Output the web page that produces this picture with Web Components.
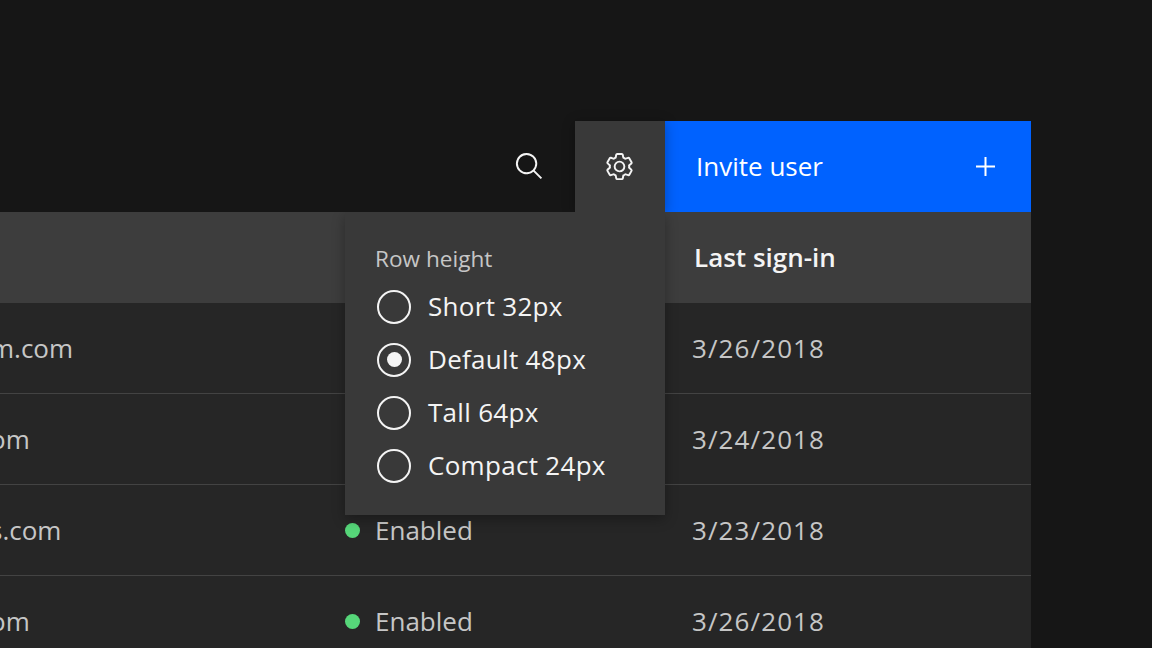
<!DOCTYPE html>
<html>
<head>
<meta charset="utf-8">
<title>Table settings</title>
<style>
html, body { margin: 0; height: 100%; background: #161616; overflow: hidden; }
body {
    font-family: "Open Sans", "Liberation Sans", sans-serif;
    font-size: 26px;
    color: #c6c6c6;
}
</style>
</head>
<body>

<user-table>
    <table-toolbar slot="toolbar"></table-toolbar>
    <table-head slot="head" label="Last sign-in"></table-head>
    <table-row date="3/26/2018">m.com</table-row>
    <table-row date="3/24/2018">om</table-row>
    <table-row date="3/23/2018" status="Enabled">s.com</table-row>
    <table-row date="3/26/2018" status="Enabled">om</table-row>
    <row-height-menu slot="overlay" label="Row height">
        <radio-option>Short 32px</radio-option>
        <radio-option checked>Default 48px</radio-option>
        <radio-option>Tall 64px</radio-option>
        <radio-option>Compact 24px</radio-option>
    </row-height-menu>
</user-table>

<script>
const columns = '345px 320px 366px';

class UserTable extends HTMLElement {
    constructor() {
        super();
        this.attachShadow({mode: 'open'});
        this.shadowRoot.innerHTML = `
        <style>
        :host { display: block; position: relative; width: 1031px; padding-top: 121px; }
        .overlay { position: absolute; left: 345px; top: 212px; z-index: 3; }
        </style>
        <slot name="toolbar"></slot>
        <slot name="head"></slot>
        <slot></slot>
        <div class="overlay"><slot name="overlay"></slot></div>`;
    }
}

class TableToolbar extends HTMLElement {
    constructor() {
        super();
        this.attachShadow({mode: 'open'});
        this.shadowRoot.innerHTML = `
        <style>
        :host { display: flex; justify-content: flex-end; height: 91px; position: relative; z-index: 4; }
        .tool {
            display: flex; align-items: center; justify-content: center; box-sizing: border-box;
            width: 90px; height: 91px; padding-right: 2px;
        }
        .tool svg { width: 31px; height: 31px; fill: #f4f4f4; }
        .active {
            position: relative; z-index: 1; background: #393939;
            box-shadow: 0 2px 12px rgba(0,0,0,.3);
            clip-path: inset(-14px -14px 0 -14px);
        }
        .invite {
            display: flex; align-items: center; justify-content: space-between;
            box-sizing: border-box; width: 366px; height: 91px; padding: 0 36px 0 31px;
            background: #0062ff; color: #fff;
        }
        .invite span { padding-bottom: 2px; }
        .invite svg { width: 19px; height: 19px; stroke: #fff; stroke-width: 2; }
        </style>
        <div class="tool">
            <svg viewBox="0 0 32 32"><path d="M29,27.5859l-7.5521-7.5521a11.0177,11.0177,0,1,0-1.4141,1.4141L27.5859,29ZM4,13a9,9,0,1,1,9,9A9.01,9.01,0,0,1,4,13Z"/></svg>
        </div>
        <div class="tool active">
            <svg viewBox="0 0 32 32"><path d="M27,16.76c0-.25,0-.5,0-.76s0-.51,0-.77l1.92-1.68A2,2,0,0,0,29.3,11L26.94,7a2,2,0,0,0-1.73-1,2,2,0,0,0-.64.1l-2.43.82a11.35,11.35,0,0,0-1.31-.75l-.51-2.52a2,2,0,0,0-2-1.61H13.64a2,2,0,0,0-2,1.61l-.51,2.52a11.48,11.48,0,0,0-1.32.75L7.43,6.06A2,2,0,0,0,6.79,6,2,2,0,0,0,5.06,7L2.7,11a2,2,0,0,0,.41,2.51L5,15.24c0,.25,0,.5,0,.76s0,.51,0,.77L3.11,18.45A2,2,0,0,0,2.7,21L5.06,25a2,2,0,0,0,1.73,1,2,2,0,0,0,.64-.1l2.43-.82a11.35,11.35,0,0,0,1.31.75l.51,2.52a2,2,0,0,0,2,1.61h4.72a2,2,0,0,0,2-1.61l.51-2.52a11.48,11.48,0,0,0,1.32-.75l2.43.82a2,2,0,0,0,.64.1,2,2,0,0,0,1.73-1L29.3,21a2,2,0,0,0-.41-2.51ZM25.21,24l-3.43-1.16a8.86,8.86,0,0,1-2.71,1.57L18.36,28H13.64l-.71-3.55a9.36,9.36,0,0,1-2.7-1.57L6.79,24,4.43,20l2.72-2.4a8.9,8.9,0,0,1,0-3.13L4.43,12,6.79,8l3.43,1.16a8.86,8.86,0,0,1,2.71-1.57L13.64,4h4.72l.71,3.55a9.36,9.36,0,0,1,2.7,1.57L25.21,8,27.57,12l-2.72,2.4a8.9,8.9,0,0,1,0,3.13L27.57,20Z"/><path d="M16,22a6,6,0,1,1,6-6A5.94,5.94,0,0,1,16,22Zm0-10a3.91,3.91,0,0,0-4,4,3.91,3.91,0,0,0,4,4,3.91,3.91,0,0,0,4-4A3.91,3.91,0,0,0,16,12Z"/></svg>
        </div>
        <div class="invite">
            <span>Invite user</span>
            <svg viewBox="0 0 19 19"><path d="M9.5 0V19M0 9.5H19"/></svg>
        </div>`;
    }
}

class TableHead extends HTMLElement {
    constructor() {
        super();
        this.attachShadow({mode: 'open'});
        this.shadowRoot.innerHTML = `
        <style>
        :host { display: grid; grid-template-columns: ${columns}; height: 91px; align-items: center; background: #3d3d3d; }
        .last { padding: 0 0 2px 29px; color: #f4f4f4; font-weight: 600; }
        </style>
        <div></div><div></div>
        <div class="last">${this.getAttribute('label')}</div>`;
    }
}

class TableRow extends HTMLElement {
    constructor() {
        super();
        this.attachShadow({mode: 'open'});
        const status = this.getAttribute('status');
        this.shadowRoot.innerHTML = `
        <style>
        :host {
            display: grid; grid-template-columns: ${columns}; box-sizing: border-box;
            height: 91px; align-items: center; background: #262626;
            border-bottom: 1px solid #434343;
        }
        .email { margin-left: -10px; }
        .status { display: flex; align-items: center; gap: 15px; }
        .dot { width: 15px; height: 15px; border-radius: 50%; background: #56d679; }
        .date { padding-left: 27px; letter-spacing: 1.1px; }
        </style>
        <div class="email"><slot></slot></div>
        <div class="status">${status ? `<span class="dot"></span><span>${status}</span>` : ''}</div>
        <div class="date">${this.getAttribute('date')}</div>`;
    }
}

class RowHeightMenu extends HTMLElement {
    constructor() {
        super();
        this.attachShadow({mode: 'open'});
        this.shadowRoot.innerHTML = `
        <style>
        :host {
            display: block; box-sizing: border-box; width: 320px; height: 303px;
            padding: 32px 0 0 30px; background: #393939;
            box-shadow: 0 4px 12px rgba(0,0,0,.3);
            clip-path: inset(0 -14px -18px -14px);
        }
        .label { font-size: 22.6px; line-height: 30px; color: #c6c6c6; margin-bottom: 6px; }
        .list { display: flex; flex-direction: column; }
        </style>
        <div class="label">${this.getAttribute('label')}</div>
        <div class="list"><slot></slot></div>`;
    }
}

class RadioOption extends HTMLElement {
    constructor() {
        super();
        this.attachShadow({mode: 'open'});
        this.shadowRoot.innerHTML = `
        <style>
        :host { display: flex; align-items: center; gap: 17px; height: 53px; padding-left: 2px; color: #f4f4f4; letter-spacing: .3px; }
        .ring {
            display: flex; align-items: center; justify-content: center; box-sizing: border-box;
            width: 34px; height: 34px; border: 2.7px solid #f4f4f4; border-radius: 50%;
        }
        .mark { width: 15px; height: 15px; border-radius: 50%; background: #f4f4f4; }
        .text { padding-bottom: 2px; }
        </style>
        <span class="ring">${this.hasAttribute('checked') ? '<span class="mark"></span>' : ''}</span>
        <span class="text"><slot></slot></span>`;
    }
}

window.customElements.define('user-table', UserTable);
window.customElements.define('table-toolbar', TableToolbar);
window.customElements.define('table-head', TableHead);
window.customElements.define('table-row', TableRow);
window.customElements.define('row-height-menu', RowHeightMenu);
window.customElements.define('radio-option', RadioOption);
</script>
</body>
</html>
